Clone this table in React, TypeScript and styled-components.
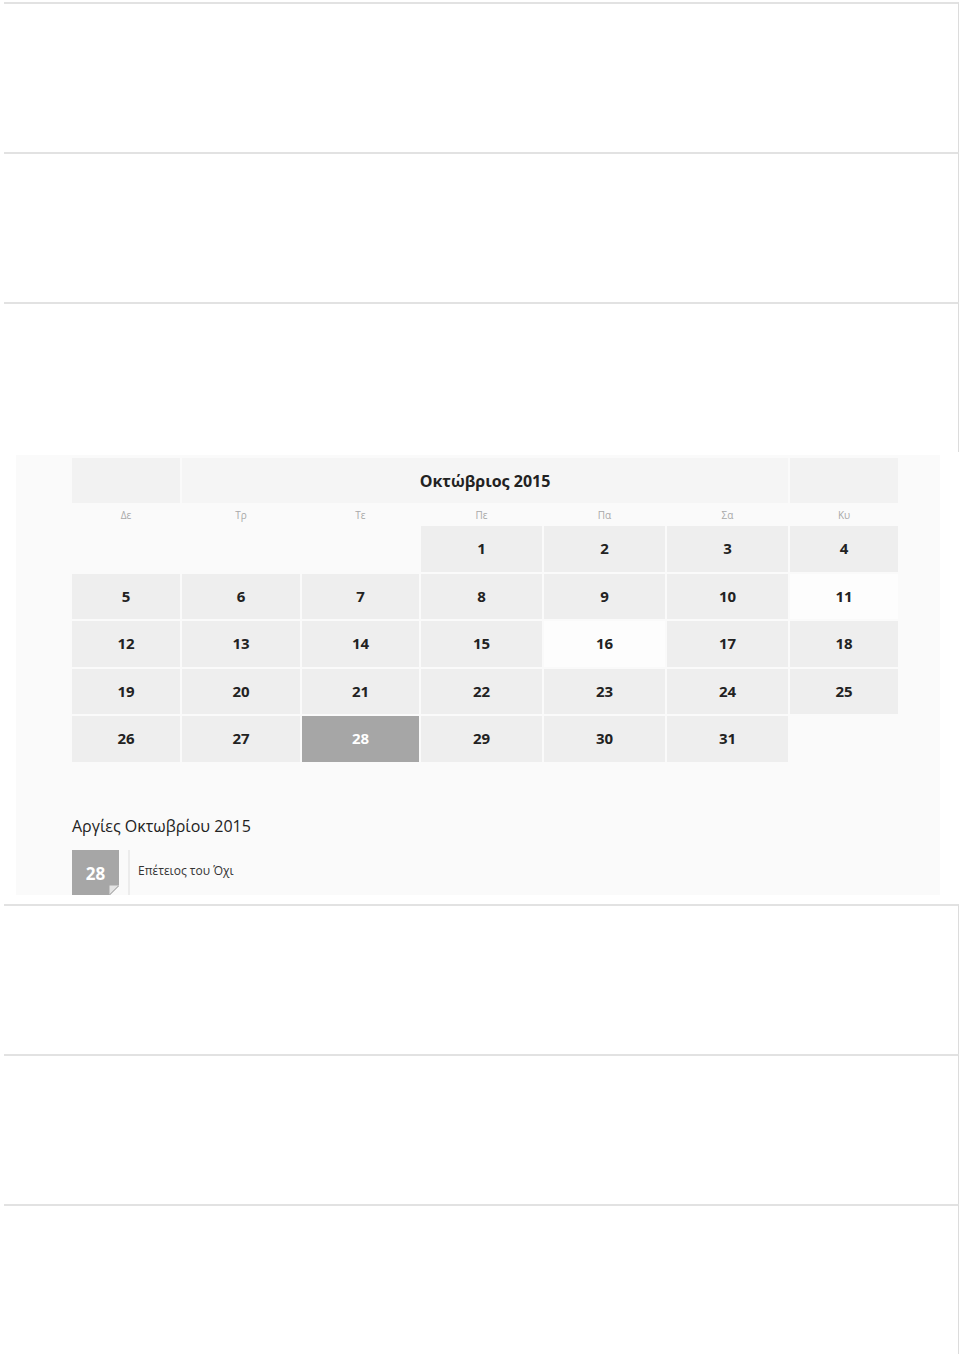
import React from 'react';
import styled, { createGlobalStyle } from 'styled-components';

const GlobalStyle = createGlobalStyle`
  html, body {
    margin: 0;
    padding: 0;
    background: #ffffff;
    font-family: 'Open Sans', 'Noto Sans', sans-serif;
  }
`;

const Page = styled.div`
  padding-top: 2px;
  width: 960px;
`;

const Block = styled.div`
  height: 148px;
  margin-left: 4px;
  width: 954px;
  border-top: 2px solid #e2e2e2;
  border-right: 1px solid #dcdcdc;
`;

const CalendarSection = styled.div`
  height: 452px;
  padding-top: 3px;
  box-sizing: border-box;
`;

const Panel = styled.div`
  margin-left: 16px;
  width: 924px;
  height: 440px;
  background: #fafafa;
  padding: 3px 0 0 56px;
  box-sizing: border-box;
  display: flex;
  flex-direction: column;
`;

const Grid = styled.div`
  display: grid;
  grid-template-columns: 108px 118px 117px 121px 121px 121px 108px;
  grid-template-rows: 45px 19px repeat(5, 45.5px);
  gap: 2px;
`;

const HeaderCell = styled.div<{ $span: number; $tone: string }>`
  grid-column: span ${p => p.$span};
  background: ${p => p.$tone};
  display: flex;
  align-items: center;
  justify-content: center;
  font-size: 16px;
  font-weight: 700;
  color: #222;
  padding-top: 1px;
`;

const WeekDay = styled.div`
  display: flex;
  align-items: center;
  justify-content: center;
  font-size: 10px;
  color: #a8a8a8;
`;

const Day = styled.div<{ $variant: 'normal' | 'light' | 'holiday' | 'empty' }>`
  display: flex;
  align-items: center;
  justify-content: center;
  padding-bottom: 1px;
  font-size: 15px;
  font-weight: 700;
  background: ${p =>
    p.$variant === 'holiday' ? '#a6a6a6' :
    p.$variant === 'light' ? '#fdfdfd' :
    p.$variant === 'empty' ? 'transparent' : '#eeeeee'};
  color: ${p => (p.$variant === 'holiday' ? '#ffffff' : '#222222')};
`;

const HolidayTitle = styled.h3`
  margin: 52px 0 0 0;
  font-size: 16px;
  font-weight: 400;
  line-height: 24px;
  color: #222;
`;

const HolidayRow = styled.div`
  display: flex;
  align-items: stretch;
  margin-top: 12px;
  height: 45px;
`;

const Badge = styled.div`
  position: relative;
  width: 47px;
  height: 45px;
  background: #a6a6a6;
  color: #fff;
  font-size: 17px;
  font-weight: 700;
  display: flex;
  align-items: center;
  justify-content: center;
  padding-top: 2px;
  box-sizing: border-box;
`;

const Fold = styled.svg`
  position: absolute;
  right: 0;
  bottom: 0;
`;

const Divider = styled.div`
  width: 2px;
  background: #ececec;
  margin-left: 9px;
`;

const HolidayName = styled.div`
  display: flex;
  align-items: center;
  padding-left: 8px;
  padding-bottom: 4px;
  font-size: 12px;
  color: #333;
`;

const weekDays = ['Δε', 'Τρ', 'Τε', 'Πε', 'Πα', 'Σα', 'Κυ'];

const cells: (number | null)[] = [
  null, null, null, 1, 2, 3, 4,
  5, 6, 7, 8, 9, 10, 11,
  12, 13, 14, 15, 16, 17, 18,
  19, 20, 21, 22, 23, 24, 25,
  26, 27, 28, 29, 30, 31, null,
];

const variantOf = (d: number | null) => {
  if (d === null) return 'empty';
  if (d === 28) return 'holiday';
  if (d === 11 || d === 16) return 'light';
  return 'normal';
};

const App: React.FC = () => {
  return (
    <>
      <GlobalStyle />
      <Page>
        <Block />
        <Block />
        <Block />
        <CalendarSection>
          <Panel>
            <Grid>
              <HeaderCell $span={1} $tone="#f2f2f2" />
              <HeaderCell $span={5} $tone="#f5f5f5">Οκτώβριος 2015</HeaderCell>
              <HeaderCell $span={1} $tone="#f2f2f2" />
              {weekDays.map(w => (
                <WeekDay key={w}>{w}</WeekDay>
              ))}
              {cells.map((d, i) => (
                <Day key={i} $variant={variantOf(d)}>{d}</Day>
              ))}
            </Grid>
            <HolidayTitle>Αργίες Οκτωβρίου 2015</HolidayTitle>
            <HolidayRow>
              <Badge>
                28
                <Fold width="10" height="10" viewBox="0 0 10 10">
                  <path d="M10 0 L10 10 L0 10 Z" fill="#fafafa" />
                  <path d="M0.5 10 L0.5 0.5 L10 0.5" fill="#e4e4e4" />
                  <path d="M0.5 10 L10 0.5" stroke="#8e8e8e" strokeWidth="1" fill="none" />
                </Fold>
              </Badge>
              <Divider />
              <HolidayName>Επέτειος του Όχι</HolidayName>
            </HolidayRow>
          </Panel>
        </CalendarSection>
        <Block />
        <Block />
        <Block />
      </Page>
    </>
  );
};

export default App;
